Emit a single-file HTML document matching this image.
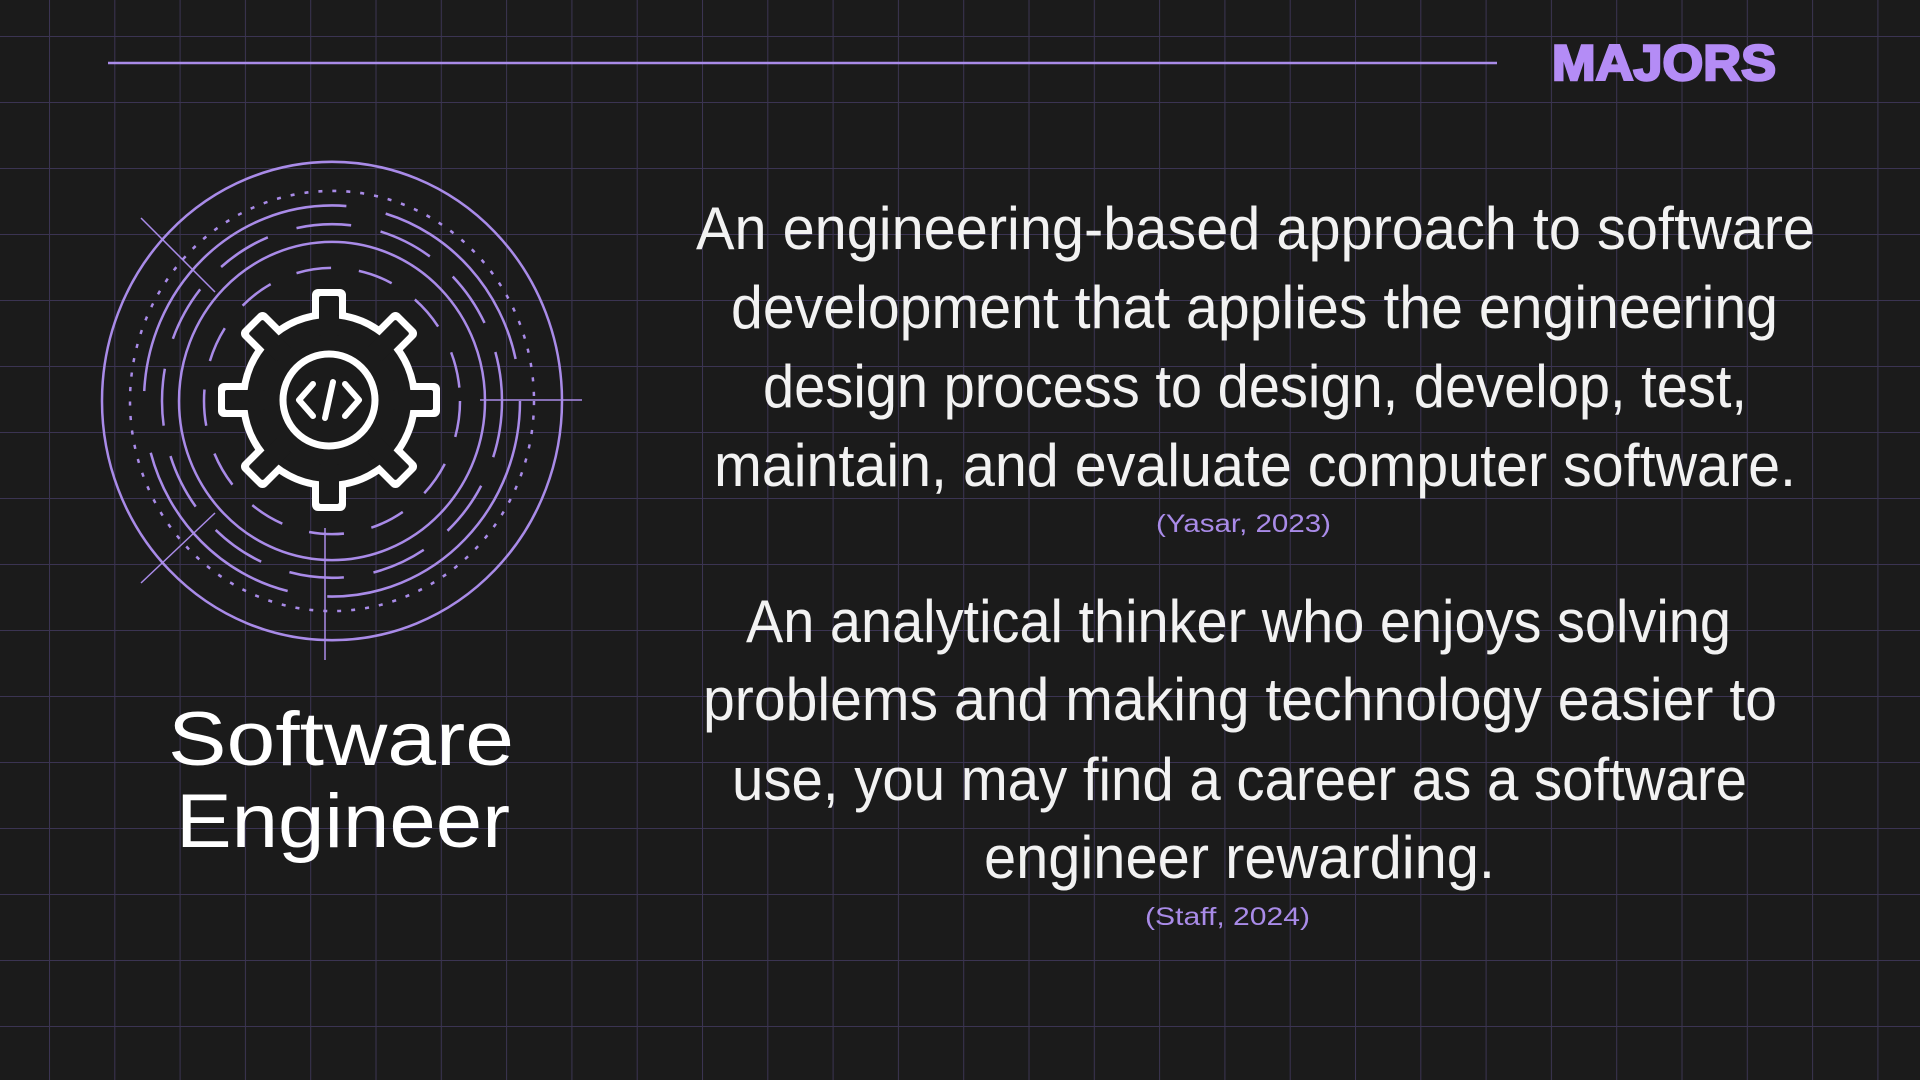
<!DOCTYPE html>
<html><head><meta charset="utf-8"><style>
html,body{margin:0;padding:0;background:#1b1b1b;width:1920px;height:1080px;overflow:hidden}
svg{display:block}
text{font-family:"Liberation Sans",sans-serif}
</style></head><body>
<svg width="1920" height="1080" viewBox="0 0 1920 1080" xmlns="http://www.w3.org/2000/svg">
<defs>
<pattern id="g" x="49" y="36" width="65.3" height="66" patternUnits="userSpaceOnUse">
<path d="M0 0V66M0 0H65.3" stroke="#3b3452" stroke-width="2" fill="none"/>
</pattern>
</defs>
<rect width="1920" height="1080" fill="#1b1b1b"/>
<rect width="1920" height="1080" fill="url(#g)"/>
<line x1="108" y1="63" x2="1497" y2="63" stroke="#a98be8" stroke-width="2.5"/>
<text x="1552" y="80" font-size="50" font-weight="bold" fill="#b48cf6" stroke="#b48cf6" stroke-width="2.5" textLength="224" lengthAdjust="spacingAndGlyphs">MAJORS</text>

<g fill="none" stroke="#a98be8" stroke-width="2.5" transform="translate(332,401) scale(1,1.04)">
<circle r="230"/>
<circle r="202" stroke-dasharray="4 10"/>
<circle r="188" stroke-dasharray="300 40 200 60"/>
<circle r="170" stroke-dasharray="55 30"/>
<circle r="153"/>
<circle r="128" stroke-dasharray="35 28"/>
</g>
<g stroke="#a98be8" stroke-width="1.5">
<line x1="141" y1="218" x2="215" y2="292"/>
<line x1="141" y1="583" x2="215" y2="513"/>
<line x1="480" y1="400" x2="582" y2="400"/>
<line x1="325" y1="528" x2="325" y2="660"/>
</g>

<g transform="translate(329,400)">
<g fill="#fff">
<circle r="89"/>
<g id="t"><rect x="-17" y="-111" width="34" height="50" rx="6"/></g>
<use href="#t" transform="rotate(45)"/><use href="#t" transform="rotate(90)"/><use href="#t" transform="rotate(135)"/>
<use href="#t" transform="rotate(180)"/><use href="#t" transform="rotate(225)"/><use href="#t" transform="rotate(270)"/><use href="#t" transform="rotate(315)"/>
</g>
<g fill="#1b1b1b">
<circle r="82"/>
<g id="u"><rect x="-10" y="-104" width="20" height="40" rx="2"/></g>
<use href="#u" transform="rotate(45)"/><use href="#u" transform="rotate(90)"/><use href="#u" transform="rotate(135)"/>
<use href="#u" transform="rotate(180)"/><use href="#u" transform="rotate(225)"/><use href="#u" transform="rotate(270)"/><use href="#u" transform="rotate(315)"/>
</g>
<circle r="46" fill="none" stroke="#fff" stroke-width="7"/>
<g fill="none" stroke="#fff" stroke-width="6" stroke-linecap="round" stroke-linejoin="round">
<path d="M-16 -16 L-30 0 L-16 16"/>
<path d="M16 -16 L30 0 L16 16"/>
<path d="M4 -18 L-4 18"/>
</g>
</g>

<text x="168" y="765" font-size="76" fill="#fff" textLength="346" lengthAdjust="spacingAndGlyphs">Software</text>
<text x="176" y="847" font-size="76" fill="#fff" textLength="334" lengthAdjust="spacingAndGlyphs">Engineer</text>

<g fill="#f2f2f2" font-size="60">
<text x="696" y="249" textLength="1119" lengthAdjust="spacingAndGlyphs">An engineering-based approach to software</text>
<text x="731" y="328" textLength="1047" lengthAdjust="spacingAndGlyphs">development that applies the engineering</text>
<text x="763" y="407" textLength="984" lengthAdjust="spacingAndGlyphs">design process to design, develop, test,</text>
<text x="714" y="486" textLength="1082" lengthAdjust="spacingAndGlyphs">maintain, and evaluate computer software.</text>
<text x="746" y="642" textLength="985" lengthAdjust="spacingAndGlyphs">An analytical thinker who enjoys solving</text>
<text x="703" y="720" textLength="1074" lengthAdjust="spacingAndGlyphs">problems and making technology easier to</text>
<text x="732" y="800" textLength="1015" lengthAdjust="spacingAndGlyphs">use, you may find a career as a software</text>
<text x="984" y="878" textLength="511" lengthAdjust="spacingAndGlyphs">engineer rewarding.</text>
</g>
<g fill="#a98be8" font-size="25">
<text x="1156" y="532" textLength="175" lengthAdjust="spacingAndGlyphs">(Yasar, 2023)</text>
<text x="1145" y="925" textLength="165" lengthAdjust="spacingAndGlyphs">(Staff, 2024)</text>
</g>
</svg>
</body></html>
